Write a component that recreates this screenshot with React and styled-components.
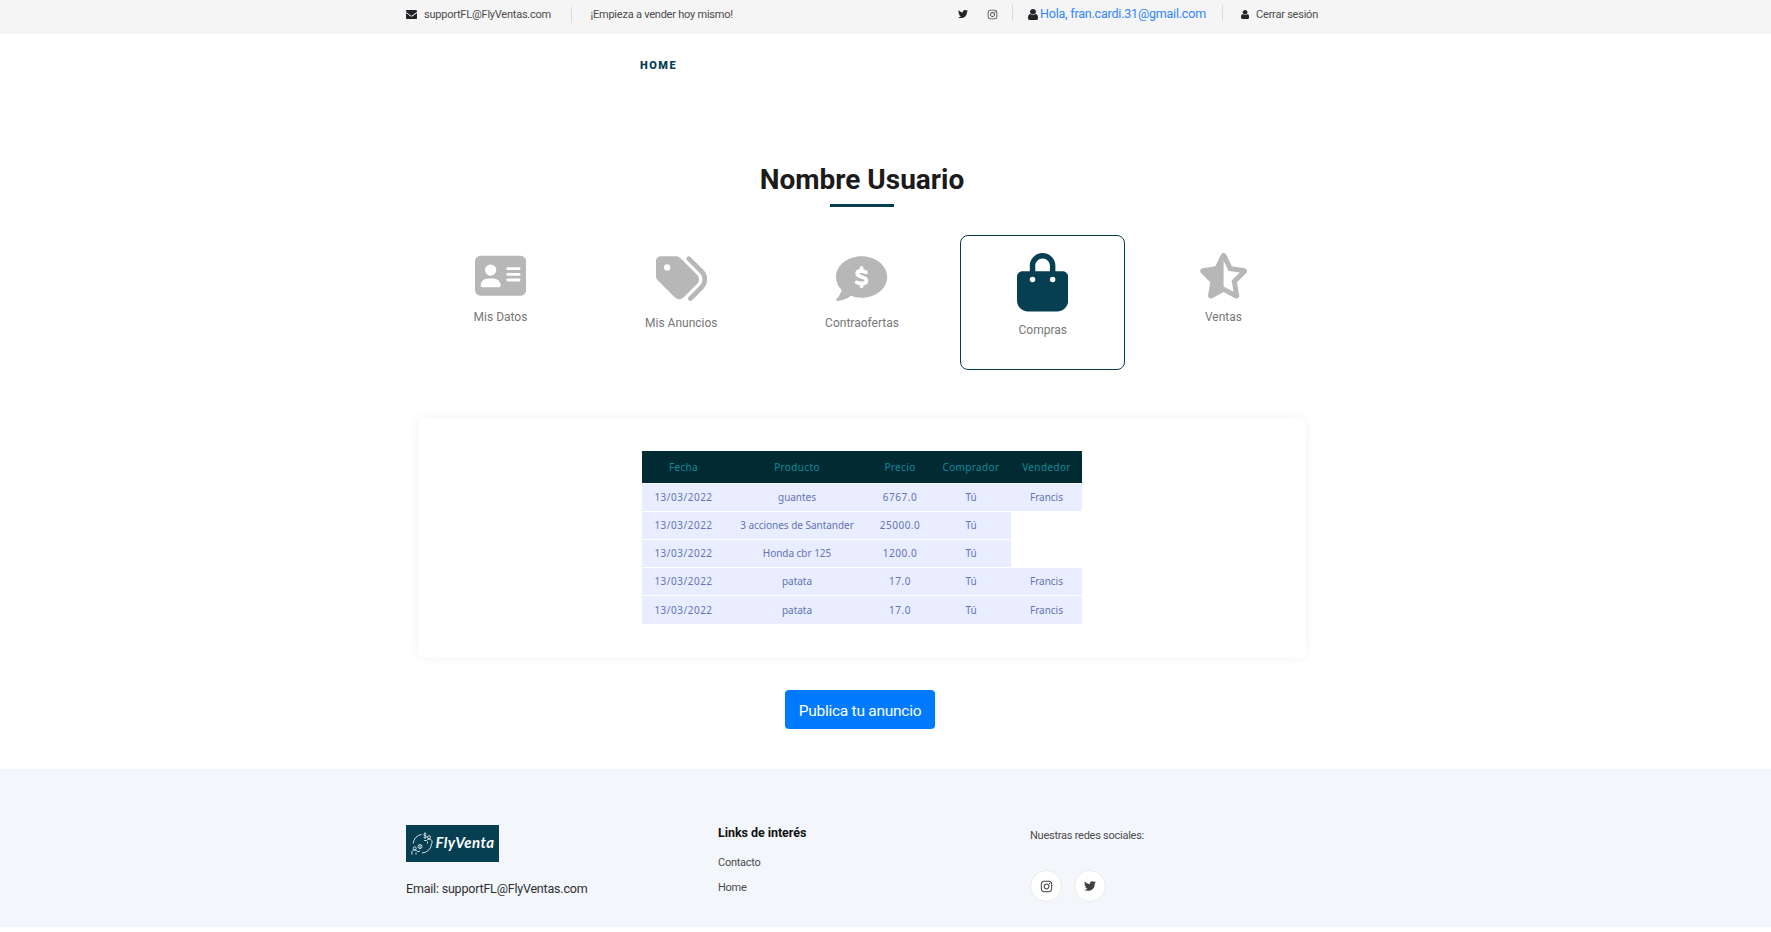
import React from "react";
import styled, { createGlobalStyle } from "styled-components";
import { FaTwitter, FaInstagram } from "react-icons/fa";
import { FaAddressCard, FaTags, FaBagShopping, FaStarHalfStroke } from "react-icons/fa6";

const GlobalStyle = createGlobalStyle`
  *, *::before, *::after { box-sizing: border-box; }
  body { margin: 0; background: #fff; font-family: Roboto, "Liberation Sans", sans-serif; color: #212529; }
  svg { display: block; flex: none; }
`;

const Container = styled.div`
  width: 912px;
  margin-left: 406px;
`;

const TopBar = styled.div`
  height: 34px;
  background: #f5f5f5;
`;

const TopRow = styled(Container)`
  display: flex;
  align-items: flex-start;
  justify-content: space-between;
`;

const TopGroup = styled.div`
  display: flex;
  align-items: center;
  height: 28px;
`;

const TopText = styled.span`
  margin-left: ${(p) => p.$gap}px;
  padding-top: ${(p) => (p.$accent ? 0 : 2)}px;
  font-size: ${(p) => (p.$accent ? 12.5 : 11)}px;
  line-height: 16px;
  letter-spacing: ${(p) => (p.$accent ? -0.2 : -0.23)}px;
  color: ${(p) => (p.$accent ? "#2f86ff" : "#4c4c4c")};
  white-space: nowrap;
`;

const Divider = styled.span`
  width: 1px;
  height: 16px;
  margin: ${(p) => p.$m};
  background: #dadada;
`;

const SocialIcon = styled.span`
  margin-right: ${(p) => p.$gap}px;
`;

const Nav = styled(Container)`
  height: 62px;
  padding: 20px 0 0 234px;
`;

const NavLink = styled.a`
  font-size: 11px;
  font-weight: 900;
  letter-spacing: 1.5px;
  line-height: 16px;
  color: #073f52;
`;

const Heading = styled.header`
  display: flex;
  flex-direction: column;
  align-items: center;
  padding-top: 67px;
`;

const Title = styled.h1`
  margin: 0;
  font-size: 28px;
  font-weight: 700;
  line-height: 34px;
  color: #1b1b1b;
`;

const Rule = styled.span`
  width: 64px;
  height: 3px;
  margin-top: 7px;
  background: #073f52;
`;

const Tabs = styled.nav`
  display: grid;
  grid-template-columns: repeat(5, 165px);
  column-gap: 15.75px;
  margin: 28px 0 0 12px;
`;

const Tab = styled.a`
  display: flex;
  flex-direction: column;
  align-items: center;
  height: 135px;
  padding-top: 17px;
  border: 1px solid ${(p) => (p.$active ? "#073f52" : "transparent")};
  border-radius: 8px;
  color: ${(p) => (p.$active ? "#073f52" : "#b7b7b7")};
  svg { width: 51.2px; height: ${(p) => p.$h}px; }
`;

const TabLabel = styled.span`
  margin-top: 10.4px;
  font-size: 12px;
  line-height: 16px;
  color: #777;
`;

const Card = styled.section`
  width: 888px;
  height: 240px;
  margin: 48px 0 0 12px;
  padding-top: 33px;
  border-radius: 8px;
  background: #fff;
  box-shadow: 0 0 12px rgba(0, 0, 0, 0.06);
`;

const Table = styled.table`
  width: 440px;
  margin: 0 auto;
  table-layout: fixed;
  border-collapse: collapse;
  font-family: "Noto Sans", "Open Sans", sans-serif;
  font-size: 10px;
  text-align: center;
`;

const Th = styled.th`
  width: ${(p) => p.$w}px;
  height: 32px;
  padding: 1px 0 0;
  font-weight: 400;
  letter-spacing: 0.35px;
  color: #108a9a;
  background: #012a33;
`;

const Td = styled.td`
  height: 28.2px;
  padding: 0 0 0.5px;
  border-top: 1px solid #fff;
  letter-spacing: ${(p) => (p.$numeric ? 0.5 : -0.03)}px;
  color: #6474b0;
  background: #e8edff;
`;

const Publish = styled.button`
  display: block;
  width: 150px;
  height: 39px;
  margin: 32px 0 40px 379px;
  padding: 3px 0 0;
  border: 0;
  border-radius: 4px;
  background: #007bff;
  color: #fff;
  font: 400 15.5px/20px Roboto, sans-serif;
  letter-spacing: -0.26px;
`;

const Footer = styled.footer`
  height: 158px;
  background: #f3f6fb;
`;

const FooterGrid = styled(Container)`
  display: grid;
  grid-template-columns: 312px 312px 288px;
  padding-top: 56px;
`;

const Logo = styled.div`
  display: flex;
  align-items: center;
  width: 93px;
  height: 37px;
  padding-left: 5px;
  background: #073f52;
`;

const LogoName = styled.span`
  margin: 0 0 3px 2.5px;
  font: italic 700 15px/20px Lato, sans-serif;
  letter-spacing: 0.45px;
  color: #fff;
`;

const Email = styled.p`
  margin: 17px 0 0;
  font-size: 12.5px;
  line-height: 20px;
  letter-spacing: -0.2px;
  color: #2f2f2f;
`;

const FooterTitle = styled.h6`
  margin: 0;
  font-size: 12.5px;
  font-weight: 700;
  line-height: 16px;
  letter-spacing: -0.05px;
  color: #111;
`;

const FooterText = styled.span`
  display: block;
  margin-top: ${(p) => p.$top}px;
  font-size: 11px;
  line-height: 16px;
  letter-spacing: -0.25px;
  color: #4c4c4c;
`;

const Circles = styled.div`
  display: flex;
  gap: 12px;
  margin-top: 26px;
`;

const Circle = styled.a`
  display: flex;
  align-items: center;
  justify-content: center;
  width: 32px;
  height: 32px;
  border: 1px solid #ebebeb;
  border-radius: 50%;
  background: #fff;
  color: #404040;
`;

const UserIcon = ({ size }) => (
  <svg height={size} width={(size * 1280) / 1408} viewBox="0 0 1280 1536" preserveAspectRatio="none" fill="#212529">
    <path d="M1280 1271q0 109-62.5 187t-150.5 78h-854q-88 0-150.5-78t-62.5-187q0-85 8.5-160.5t31.5-152 58.5-131 94-89 134.5-34.5q131 128 313 128t313-128q76 0 134.5 34.5t94 89 58.5 131 31.5 152 8.5 160.5zm-256-887q0 159-112.5 271.5t-271.5 112.5-271.5-112.5-112.5-271.5 112.5-271.5 271.5-112.5 271.5 112.5 112.5 271.5z" />
  </svg>
);

const EnvelopeIcon = () => (
  <svg width="11" height="9" viewBox="0 256 1792 1408" preserveAspectRatio="none" fill="#212529">
    <path d="M1792 710v794q0 66-47 113t-113 47h-1472q-66 0-113-47t-47-113v-794q44 49 101 87 362 246 497 345 57 42 92.5 65.5t94.5 48 110 24.5h2q51 0 110-24.5t94.5-48 92.5-65.5q170-123 498-345 57-39 100-87zm0-294q0 79-49 151t-122 123q-376 261-468 325-10 7-42.5 31t-54 38.5-52 32.5-57.5 27-50 9h-2q-23 0-50-9t-57.5-27-52-32.5-54-38.5-42.5-31q-91-64-262-182.5t-205-142.5q-62-42-117-115.5t-55-136.5q0-78 41.5-130t118.5-52h1472q65 0 112.5 47t47.5 113z" />
  </svg>
);

const OfferIcon = () => (
  <svg viewBox="0 0 512 512" fill="currentColor">
    <path d="M256 32C114.600 32 0 125.100 0 240c0 49.630 21.350 94.980 56.970 130.700c-12.500 50.370-54.270 95.270-54.770 95.770c-2.250 2.250-2.875 5.734-1.500 8.734C1.979 478.200 4.750 480 8 480c66.250 0 115.100-31.760 140.600-51.390C181.200 440.900 217.600 448 256 448c141.400 0 256-93.130 256-208S397.400 32 256 32z" />
    <path d="M256 150v30M256 302v30M300 192c-30-12-88-24-88 14 0 46 92 22 92 70 0 42-60 34-96 18" fill="none" stroke="#fff" strokeWidth="38" strokeLinecap="round" strokeLinejoin="round" />
  </svg>
);

const LogoMark = () => (
  <svg width="22" height="25" viewBox="0 0 22 25" fill="none" stroke="#d3dfe3" strokeWidth="1">
    <path d="M2.200 12.500A10 10 0 0 1 10.500 3.400M20.600 12.500A10 10 0 0 1 11 22" />
    <path d="M15.400 3.200c-1-1.200-3-.6-2.600.7.300 1 2.600.7 2.700 1.900.1 1.300-2.100 1.500-3 .4M14 1.300v6" />
    <circle cx="18" cy="6.200" r="1.500" />
    <path d="M13.200 9.500h2.500l1-1.200h3l1.300 1.500v2.700M16.500 10.500v2" />
    <circle cx="3.700" cy="17.300" r="1.500" />
    <path d="M.9 23.500v-3l1.300-1.300h3l1.400 1.500 2.400-.7M5 21.500v2" />
    <circle cx="9" cy="15.500" r="2" />
    <path d="M9 14.200v2.600" />
  </svg>
);

const tabs = [
  { label: "Mis Datos", Icon: FaAddressCard, h: 45.5 },
  { label: "Mis Anuncios", Icon: FaTags, h: 51.2 },
  { label: "Contraofertas", Icon: OfferIcon, h: 51.2 },
  { label: "Compras", Icon: FaBagShopping, h: 58.5, active: true },
  { label: "Ventas", Icon: FaStarHalfStroke, h: 45.5 },
];

const columns = [["Fecha", 83], ["Producto", 144], ["Precio", 62], ["Comprador", 80], ["Vendedor", 71]];

const purchases = [
  ["13/03/2022", "guantes", "6767.0", "Tú", "Francis"],
  ["13/03/2022", "3 acciones de Santander", "25000.0", "Tú"],
  ["13/03/2022", "Honda cbr 125", "1200.0", "Tú"],
  ["13/03/2022", "patata", "17.0", "Tú", "Francis"],
  ["13/03/2022", "patata", "17.0", "Tú", "Francis"],
];

export default function App() {
  return (
    <>
      <GlobalStyle />
      <TopBar>
        <TopRow>
          <TopGroup>
            <EnvelopeIcon />
            <TopText $gap={7}>supportFL@FlyVentas.com</TopText>
            <Divider $m="2px 18.5px 0 20px" />
            <TopText $gap={0}>¡Empieza a vender hoy mismo!</TopText>
          </TopGroup>
          <TopGroup>
            <SocialIcon $gap={19}><FaTwitter size={10} color="#212529" /></SocialIcon>
            <SocialIcon $gap={14}><FaInstagram size={11} color="#4a4a4a" /></SocialIcon>
            <Divider $m="0 15px 2px 0" />
            <UserIcon size={11} />
            <TopText $gap={2} $accent>Hola, fran.cardi.31@gmail.com</TopText>
            <Divider $m="0 18px 2px 16px" />
            <UserIcon size={9} />
            <TopText $gap={7}>Cerrar sesión</TopText>
          </TopGroup>
        </TopRow>
      </TopBar>
      <Nav as="nav"><NavLink>HOME</NavLink></Nav>
      <Container as="main">
        <Heading>
          <Title>Nombre Usuario</Title>
          <Rule />
        </Heading>
        <Tabs>
          {tabs.map(({ label, Icon, h, active }) => (
            <Tab key={label} $active={active} $h={h}>
              <Icon />
              <TabLabel>{label}</TabLabel>
            </Tab>
          ))}
        </Tabs>
        <Card>
          <Table>
            <thead>
              <tr>{columns.map(([name, w]) => <Th key={name} $w={w}>{name}</Th>)}</tr>
            </thead>
            <tbody>
              {purchases.map((row, i) => (
                <tr key={i}>
                  {row.map((cell, j) => <Td key={j} $numeric={j === 0 || j === 2}>{cell}</Td>)}
                </tr>
              ))}
            </tbody>
          </Table>
        </Card>
        <Publish>Publica tu anuncio</Publish>
      </Container>
      <Footer>
        <FooterGrid>
          <div>
            <Logo><LogoMark /><LogoName>FlyVenta</LogoName></Logo>
            <Email>Email: supportFL@FlyVentas.com</Email>
          </div>
          <div>
            <FooterTitle>Links de interés</FooterTitle>
            <FooterText $top={14}>Contacto</FooterText>
            <FooterText $top={9}>Home</FooterText>
          </div>
          <div>
            <FooterText $top={3}>Nuestras redes sociales:</FooterText>
            <Circles>
              <Circle><FaInstagram size={13} /></Circle>
              <Circle><FaTwitter size={12} /></Circle>
            </Circles>
          </div>
        </FooterGrid>
      </Footer>
    </>
  );
}
